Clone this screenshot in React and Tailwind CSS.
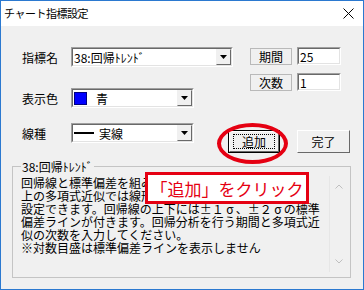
import React from "react";

function Sunken({ className = "", children }) {
  return (
    <div className={`border border-t-[#a0a0a0] border-l-[#a0a0a0] border-r-white border-b-white ${className}`}>
      <div className="flex h-full w-full items-center border border-t-[#696969] border-l-[#696969] border-r-[#e3e3e3] border-b-[#e3e3e3] bg-white">
        {children}
      </div>
    </div>
  );
}

function DropBtn() {
  return (
    <div className="ml-auto flex h-full w-[15px] items-center justify-center border border-t-[#f0f0f0] border-l-[#f0f0f0] border-r-[#696969] border-b-[#696969] bg-[#f0f0f0]">
      <svg width="7" height="4" viewBox="0 0 7 4">
        <path d="M0 0H7L3.5 4Z" fill="#000" />
      </svg>
    </div>
  );
}

function W({ children }) {
  return <span className="inline-block w-[12px] text-center">{children}</span>;
}

export default function App() {
  return (
    <div className="relative flex h-[290px] w-[364px] flex-col border border-[#2b79d0] bg-white font-['Noto_Sans_CJK_JP',sans-serif] text-[12px] leading-[13px] text-black">
      {/* title bar */}
      <div className="flex h-[25px] items-center justify-between pl-[3px] pr-[9px]">
        <span className="text-[11px] tracking-[-0.5px]">チャート指標設定</span>
        <svg width="11" height="11" viewBox="0 0 11 11">
          <path d="M0.5 0.5L10.5 10.5M10.5 0.5L0.5 10.5" stroke="#000" strokeWidth="1" />
        </svg>
      </div>

      {/* body */}
      <div className="flex flex-1 flex-col bg-[#f0f0f0] px-[11px] pt-[21px]">
        <div className="flex pl-[10px]">
          <div className="flex flex-col">
            <div className="flex items-center">
              <span className="w-[49px]">指標名</span>
              <Sunken className="h-[20px] w-[162px]">
                <span className="pl-[1px]">38:回帰ﾄﾚﾝﾄﾞ</span>
                <DropBtn />
              </Sunken>
            </div>
            <div className="mt-[21px] flex items-center">
              <span className="w-[49px]">表示色</span>
              <Sunken className="h-[20px] w-[123px]">
                <span className="ml-[1px] h-[13px] w-[13px] border border-[#000080] bg-[#0000ff]" />
                <span className="ml-[9px]">青</span>
                <DropBtn />
              </Sunken>
            </div>
          </div>
          <div className="ml-[17px] flex flex-col">
            <div className="flex items-center">
              <div className="flex h-[17px] w-[42px] items-center justify-center border border-[#b9b9b9]">期間</div>
              <Sunken className="ml-[5px] h-[18px] w-[44px]">
                <span className="pl-[1px]">25</span>
              </Sunken>
            </div>
            <div className="mt-[8px] flex items-center">
              <div className="flex h-[17px] w-[42px] items-center justify-center border border-[#b9b9b9]">次数</div>
              <Sunken className="ml-[5px] h-[18px] w-[44px]">
                <span className="pl-[1px]">1</span>
              </Sunken>
            </div>
          </div>
        </div>

        <div className="mt-[15px] flex items-start pl-[10px]">
          <div className="flex h-[20px] w-[49px] items-center">線種</div>
          <Sunken className="h-[20px] w-[123px]">
            <span className="ml-[1px] h-[2px] w-[20px] bg-black" />
            <span className="ml-[5px]">実線</span>
            <DropBtn />
          </Sunken>
          <div className="ml-[34px] mt-[7px] flex h-[23px] w-[52px] items-center justify-center border border-black bg-[#f0f0f0]">
            <div className="flex h-full w-full items-center justify-center border border-t-white border-l-white border-r-[#696969] border-b-[#696969]">
              <div className="flex h-[15px] w-[42px] items-center justify-center border border-dotted border-black">追加</div>
            </div>
          </div>
          <div className="ml-[17px] mt-[7px] flex h-[23px] w-[53px] items-center justify-center border border-t-white border-l-white border-r-[#696969] border-b-[#696969] bg-[#f0f0f0]">
            完了
          </div>
        </div>

        {/* group box */}
        <div className="relative mt-[13px] h-[112px] w-[339px] border border-[#c4c4c4]">
          <span className="absolute left-[8px] top-[-7px] bg-[#f0f0f0] px-[1px] leading-[13px]">38:回帰ﾄﾚﾝﾄﾞ</span>
          <div className="ml-[6px] mt-[9px] flex h-[96px] w-[328px]">
            <div className="flex-1 overflow-hidden pl-[2px] leading-[13px] whitespace-nowrap">
              回帰線と標準偏差を組み合わせたもので、2次以<br />
              上の多項式近似では線形回帰を2次曲線などで<br />
              設定できます。回帰線の上下には<W>±</W><W>１</W><W>σ</W>、<W>±</W><W>２</W><W>σ</W>の標準<br />
              偏差ラインが付きます。回帰分析を行う期間と多項式近<br />
              似の次数を入力してください。<br />
              ※対数目盛は標準偏差ラインを表示しません
            </div>
            <div className="flex w-[18px] flex-col items-center justify-between border-l border-[#e6e6e6] py-[8px]">
              <svg width="8" height="5" viewBox="0 0 8 5">
                <path d="M0.5 4.5L4 1L7.5 4.5" stroke="#bfbfbf" fill="none" />
              </svg>
              <svg width="8" height="5" viewBox="0 0 8 5">
                <path d="M0.5 0.5L4 4L7.5 0.5" stroke="#bfbfbf" fill="none" />
              </svg>
            </div>
          </div>
        </div>
      </div>

      {/* red ellipse annotation */}
      <div className="absolute left-[216px] top-[122px] h-[41px] w-[71px] rounded-[50%] border-[4px] border-[#e50012]" />
      {/* callout */}
      <div className="absolute left-[144px] top-[171px] flex h-[32px] w-[164px] items-center justify-center whitespace-nowrap border-[3px] border-[#e50012] bg-white text-[17px] leading-none text-[#e50012]">
        「追加」をクリック
      </div>
    </div>
  );
}
